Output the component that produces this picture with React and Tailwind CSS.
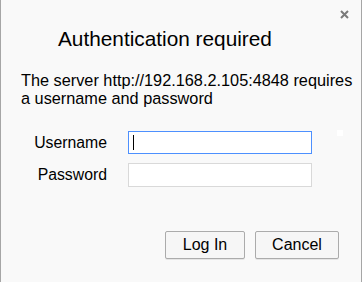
import React from 'react';

export default function App() {
  return (
    <div
      className="relative w-[362px] h-[282px] bg-[#f9f9f9] border-l border-r border-[#a6a6a6] text-black"
      style={{ fontFamily: '"Liberation Sans", Arial, sans-serif' }}
    >
      <button className="absolute right-[12px] top-[9px] w-[10px] h-[10px] flex items-center justify-center">
        <svg width="9" height="9" viewBox="0 0 9 9">
          <path d="M1 1 L8 8 M8 1 L1 8" stroke="#7a7a7a" strokeWidth="2" />
        </svg>
      </button>

      <div className="pt-[27px] pl-[57px] text-[20.8px] leading-[24px]">Authentication required</div>

      <p className="mt-[20px] pl-[20px] pr-[4px] text-[16.3px] leading-[18px]">
        The server http://192.168.2.105:4848 requires a username and password
      </p>

      <div className="mt-[24px] grid grid-cols-[106px_184px] gap-x-[21px] gap-y-[9px] items-center">
        <label className="text-right text-[15.8px] leading-[18px]">Username</label>
        <div className="h-[23px] bg-white border border-[#4d90fe] flex items-center pl-[4px]">
          <span className="w-px h-[15px] bg-black" />
        </div>
        <label className="text-right text-[15.8px] leading-[18px]">Password</label>
        <div className="h-[24px] bg-white border border-[#d9d9d9]" />
      </div>

      <span className="absolute left-[336px] top-[130px] w-[6px] h-[6px] bg-white" />

      <div className="mt-[44px] flex justify-end gap-[10px] pr-[22px]">
        <button className="w-[80px] h-[28px] border border-[#ababab] rounded-[2px] bg-[#f6f6f6] text-[16px] leading-[18px] shadow-[0_1px_0_rgba(0,0,0,0.08)]">
          Log In
        </button>
        <button className="w-[84px] h-[28px] border border-[#ababab] rounded-[2px] bg-[#f6f6f6] text-[16px] leading-[18px] shadow-[0_1px_0_rgba(0,0,0,0.08)]">
          Cancel
        </button>
      </div>
    </div>
  );
}
